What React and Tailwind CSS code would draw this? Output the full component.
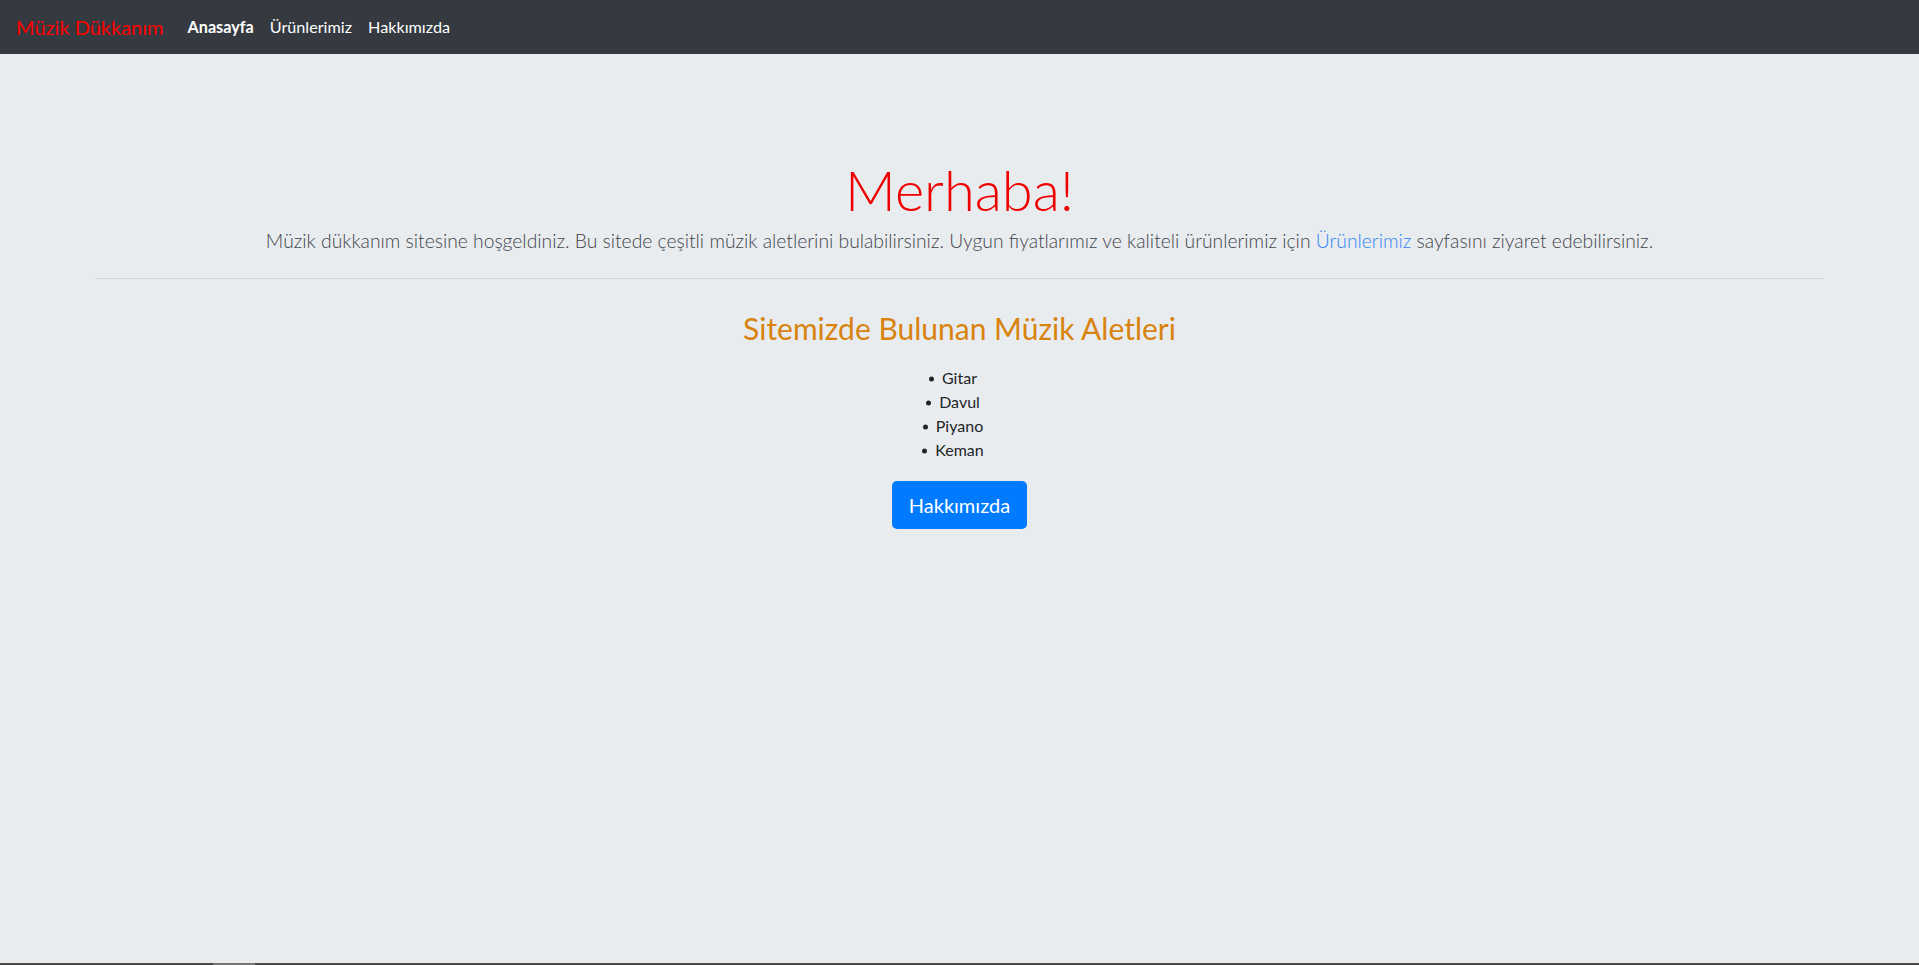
import React from 'react'

const font = { fontFamily: 'Lato, "Open Sans", sans-serif' }

function Navbar() {
  return (
    <nav className="flex items-center h-[54px] bg-[#343a40] px-4">
      <a className="text-[20px] text-[#ff0000] mr-[24px] leading-none" href="#">Müzik Dükkanım</a>
      <ul className="flex items-center gap-[16px] text-[16.2px] leading-none">
        <li><a className="font-bold text-white" href="#">Anasayfa</a></li>
        <li><a className="text-white" href="#">Ürünlerimiz</a></li>
        <li><a className="text-white" href="#">Hakkımızda</a></li>
      </ul>
    </nav>
  )
}

export default function App() {
  const items = ['Gitar', 'Davul', 'Piyano', 'Keman']
  return (
    <div className="min-h-[965px] flex flex-col bg-[#e9ecef]" style={font}>
      <Navbar />
      <main className="flex-1 px-[95px] pt-[102px] text-center">
        <h1 className="text-[56px] font-light leading-[1.2] text-[#ee0000]">Merhaba!</h1>
        <p className="mt-[4px] text-[19.3px] font-light leading-[1.5] text-[#3f454b]">
          Müzik dükkanım sitesine hoşgeldiniz. Bu sitede çeşitli müzik aletlerini bulabilirsiniz. Uygun fiyatlarımız ve kaliteli ürünlerimiz için{' '}
          <a href="#" className="text-[#2f86f5]">Ürünlerimiz</a> sayfasını ziyaret edebilirsiniz.
        </p>
        <hr className="mt-[22px] border-t border-[#d1d4d7]" />
        <h3 className="mt-[31px] text-[30px] leading-[1.2] text-[#d8830d]">Sitemizde Bulunan Müzik Aletleri</h3>
        <ul className="mt-[20px] text-[16px] leading-[24px] text-[#212529]">
          {items.map((it) => (
            <li key={it}>
              <span className="relative">
                <span className="absolute right-full top-[55%] -translate-y-1/2 mr-[8px] w-[5px] h-[5px] rounded-full bg-[#212529]" />
                {it}
              </span>
            </li>
          ))}
        </ul>
        <button className="mt-[19px] h-[48px] px-[17px] rounded-[5px] bg-[#007bff] text-white text-[20px] leading-[1.5]">
          Hakkımızda
        </button>
      </main>
      <div className="h-[2px] bg-[#4a4a4a] flex">
        <div className="ml-[213px] w-[42px] bg-[#767676]" />
      </div>
    </div>
  )
}
